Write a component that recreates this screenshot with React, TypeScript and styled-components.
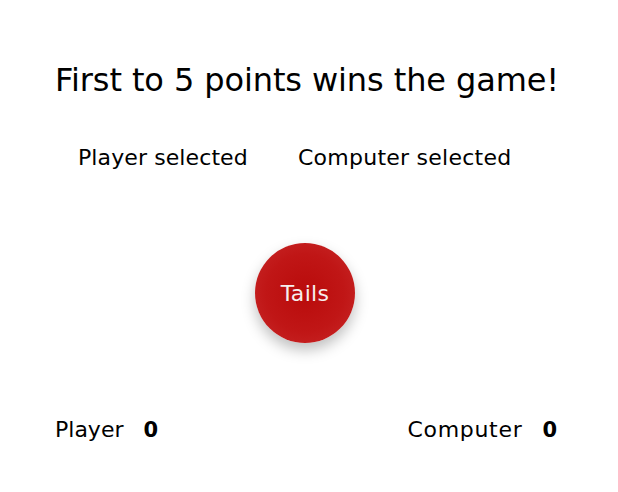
import React from "react";
import styled, { createGlobalStyle } from "styled-components";

const Global = createGlobalStyle`
  html, body { margin: 0; padding: 0; background: #ffffff; }
  body { font-family: "DejaVu Sans", "Noto Sans", sans-serif; color: #000; }
`;

const Page = styled.main`
  box-sizing: border-box;
  width: 618px;
  height: 492px;
  padding: 60px 0 0 55px;
`;

const Column = styled.div`
  width: 502px;
  display: flex;
  flex-direction: column;
`;

const Title = styled.h1`
  margin: 0;
  font-size: 32px;
  font-weight: 400;
  line-height: 40px;
  letter-spacing: -0.1px;
  white-space: nowrap;
`;

const Picks = styled.div`
  margin-top: 46px;
  padding-left: 23px;
  display: grid;
  grid-template-columns: 220px auto;
`;

const Pick = styled.span`
  font-size: 22px;
  font-weight: 400;
  line-height: 24px;
  letter-spacing: 0.1px;
  white-space: nowrap;
`;

const PickWide = styled(Pick)`
  letter-spacing: 0.25px;
`;

const Coin = styled.button`
  margin-top: 73px;
  align-self: center;
  width: 100px;
  height: 100px;
  border: none;
  border-radius: 50%;
  padding: 0;
  background: radial-gradient(circle at 50% 50%, #b90b0b 0%, #c01616 55%, #c92a2a 100%);
  box-shadow: 0 7px 14px rgba(0, 0, 0, 0.25);
  color: #f6eeee;
  font-family: "DejaVu Sans", sans-serif;
  font-size: 22px;
  letter-spacing: 0.3px;
  transform: translateX(-1px);
`;

const Scores = styled.div`
  margin-top: 75px;
  display: flex;
  justify-content: space-between;
`;

const Score = styled.div`
  display: flex;
  gap: 20px;
  line-height: 24px;
  font-size: 22px;
`;

const Label = styled.span<{ $spacing: number }>`
  font-weight: 400;
  letter-spacing: ${(p) => p.$spacing}px;
`;

const Points = styled.span`
  font-weight: 600;
  font-size: 21px;
`;

export default function App() {
  return (
    <>
      <Global />
      <Page>
        <Column>
          <Title>First to 5 points wins the game!</Title>
          <Picks>
            <Pick>Player selected</Pick>
            <PickWide>Computer selected</PickWide>
          </Picks>
          <Coin>Tails</Coin>
          <Scores>
            <Score>
              <Label $spacing={0}>Player</Label>
              <Points>0</Points>
            </Score>
            <Score>
              <Label $spacing={0.7}>Computer</Label>
              <Points>0</Points>
            </Score>
          </Scores>
        </Column>
      </Page>
    </>
  );
}
